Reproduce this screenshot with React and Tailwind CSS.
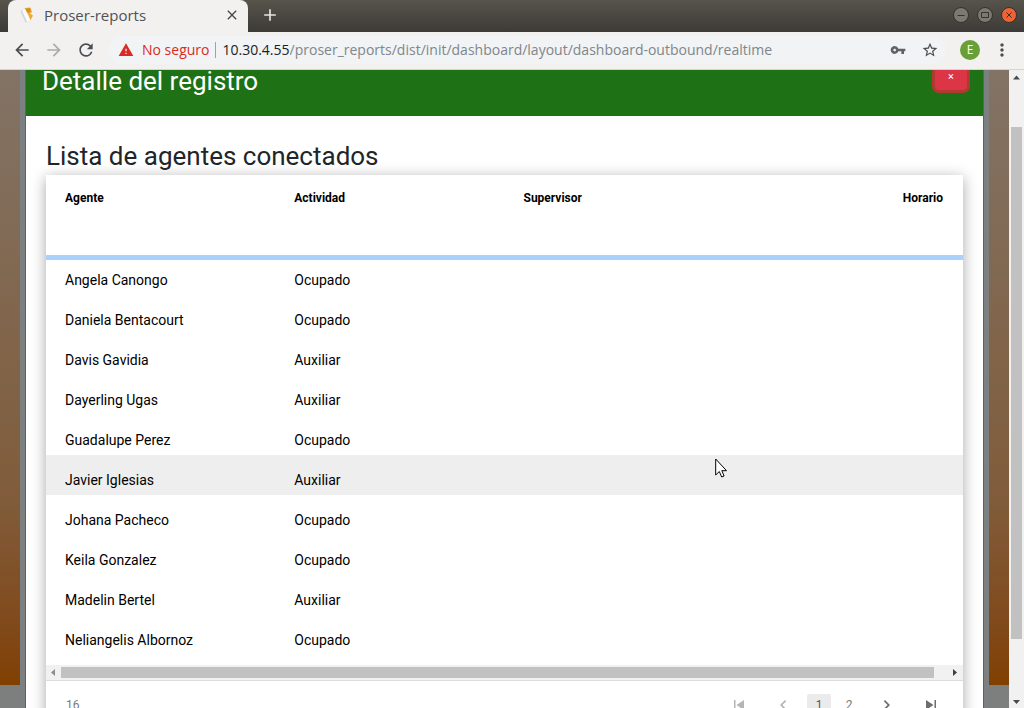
import React from "react";
import {
  MdAdd,
  MdArrowBack,
  MdArrowForward,
  MdClose,
  MdMoreVert,
  MdRefresh,
  MdStarBorder,
  MdVpnKey,
  MdWarning,
} from "react-icons/md";

const agents = [
  ["Angela Canongo", "Ocupado"],
  ["Daniela Bentacourt", "Ocupado"],
  ["Davis Gavidia", "Auxiliar"],
  ["Dayerling Ugas", "Auxiliar"],
  ["Guadalupe Perez", "Ocupado"],
  ["Javier Iglesias", "Auxiliar"],
  ["Johana Pacheco", "Ocupado"],
  ["Keila Gonzalez", "Ocupado"],
  ["Madelin Bertel", "Auxiliar"],
  ["Neliangelis Albornoz", "Ocupado"],
];

function Favicon() {
  return (
    <svg viewBox="0 0 16 16" className="size-4" aria-hidden="true">
      <path d="M0.500 4 3.500 2.500 9 14.500 5.500 15.500z" fill="#cfd3dd" />
      <path d="M2 3.500 5 2 13 12 7 15z" fill="#fbfbfd" />
      <path d="M4.500 1 10.500.500 12 5 10 6.500 13 8.500 10.500 13.500 8.500 8.500z" fill="#edaa3a" />
      <path d="M5.500 1.800 10 1.300 10.500 4.500 8 6z" fill="#d48f1d" />
    </svg>
  );
}

function WindowButton({ label, tone, children }) {
  return (
    <button
      type="button"
      aria-label={label}
      className={`flex size-4 items-center justify-center rounded-full border border-[#33322e] ${tone}`}
    >
      <svg viewBox="0 0 10 10" className="size-2.5" fill="none" stroke="#35332f">
        {children}
      </svg>
    </button>
  );
}

function TabStrip() {
  return (
    <div className="flex h-8 shrink-0 items-end bg-linear-to-b from-[#57544c] to-[#3d3b37] pl-2">
      <div className="flex h-8 w-60 items-center rounded-t-lg bg-[#f2f1f0] pr-2 pb-0.5 pl-3 text-[#4f5256]">
        <Favicon />
        <span className="ml-2 flex-1 text-[15px] leading-5">Proser-reports</span>
        <button type="button" aria-label="Cerrar pestaña">
          <MdClose className="size-4 text-[#45494d]" />
        </button>
      </div>
      <button type="button" aria-label="Nueva pestaña" className="ml-3 self-center pb-0.5">
        <MdAdd className="size-5 text-[#e6e4e0]" />
      </button>
      <div className="ml-auto flex gap-2 self-center pr-[7px] pb-0.5">
        <WindowButton label="Minimizar" tone="bg-[#7b7970]">
          <path d="M1.500 5.500h7" />
        </WindowButton>
        <WindowButton label="Maximizar" tone="bg-[#7b7970]">
          <path d="M1.500 2.500h7v5h-7z" />
        </WindowButton>
        <WindowButton label="Cerrar" tone="bg-[#ef6236]">
          <path d="m2.500 2.500 5 5m0-5-5 5" />
        </WindowButton>
      </div>
    </div>
  );
}

function Toolbar() {
  return (
    <div className="flex h-[38px] shrink-0 items-center border-b border-[#d5d4d2] bg-[#f2f1f0] px-3 pb-0.5 text-[#4a4d51]">
      <button type="button" aria-label="Atrás">
        <MdArrowBack className="size-5" />
      </button>
      <button type="button" aria-label="Adelante" className="ml-3 text-[#a9aaab]">
        <MdArrowForward className="size-5" />
      </button>
      <button type="button" aria-label="Recargar" className="ml-3">
        <MdRefresh className="size-5" />
      </button>
      <div className="ml-3 flex h-7 min-w-0 flex-1 items-center rounded-full bg-[#f1f3f4] pr-2 pl-2.5 text-sm">
        <MdWarning className="size-4 shrink-0 text-[#d92b22]" />
        <span className="ml-2 whitespace-nowrap text-[#d92b22]">No seguro</span>
        <span className="mx-1.5 h-4 w-px shrink-0 bg-[#a0a3a6]" />
        <label htmlFor="address" className="whitespace-nowrap text-[#202124]">
          10.30.4.55
        </label>
        <input
          id="address"
          type="text"
          defaultValue="/proser_reports/dist/init/dashboard/layout/dashboard-outbound/realtime"
          className="min-w-0 flex-1 bg-transparent text-[#80868b] outline-none"
        />
        <button type="button" aria-label="Contraseñas">
          <MdVpnKey className="size-4 text-[#5f6368]" />
        </button>
        <button type="button" aria-label="Añadir a marcadores" className="ml-4">
          <MdStarBorder className="size-4 scale-110 text-[#4a4d51]" />
        </button>
      </div>
      <button
        type="button"
        aria-label="Perfil"
        className="ml-3.5 flex size-5 items-center justify-center rounded-full bg-[#689f38] text-xs text-white"
      >
        E
      </button>
      <button type="button" aria-label="Menú" className="ml-3">
        <MdMoreVert className="size-5" />
      </button>
    </div>
  );
}

function Backdrop() {
  return (
    <div className="flex w-5 shrink-0 flex-col bg-[#7d7f7e]">
      <div className="flex-1 bg-linear-to-b from-[#827365] from-0% via-[#805c3a] via-70% to-[#804000]" />
      <div className="h-[23px]" />
    </div>
  );
}

function Header() {
  return (
    <header className="flex h-[46px] shrink-0 items-start justify-between bg-[#1e7115] pr-4 pl-4">
      <h4 className="text-[26px] leading-[22px] text-white">Detalle del registro</h4>
      <button
        type="button"
        aria-label="Cerrar detalle"
        className="h-5 w-8 rounded-b-sm bg-[#dc3545] pb-1.5 text-[11px] leading-3 text-white ring-3 ring-[#b03a30]"
      >
        ×
      </button>
    </header>
  );
}

function AgentTable() {
  return (
    <div className="relative overflow-hidden">
      <table className="w-full table-fixed text-sm text-black">
        <thead>
          <tr className="h-20 text-left align-top text-xs">
            <th className="px-[19px] pt-3.5 leading-[18px]">Agente</th>
            <th className="px-[19px] pt-3.5 leading-[18px]">Actividad</th>
            <th className="px-[19px] pt-3.5 leading-[18px]">Supervisor</th>
            <th className="px-5 pt-3.5 text-right leading-[18px]">Horario</th>
          </tr>
        </thead>
        <tbody>
          {agents.map(([name, activity]) => (
            <tr
              key={name}
              className={`h-10 ${name === "Javier Iglesias" ? "bg-[#eeeeee]" : ""}`}
            >
              <td className="px-[19px] pt-2.5">{name}</td>
              <td className="px-[19px] pt-2.5">{activity}</td>
              <td />
              <td />
            </tr>
          ))}
        </tbody>
      </table>
      <div role="progressbar" aria-label="Cargando" className="absolute inset-x-0 top-20 h-[5px] bg-[#aad1f9]" />
    </div>
  );
}

function HorizontalScroll() {
  return (
    <div className="mt-2.5 flex h-[15px] items-center bg-[#f1f1f1]">
      <svg viewBox="0 0 15 15" className="size-[15px]" fill="#8d8d8d">
        <path d="M9 4v7L5 7.500z" />
      </svg>
      <div className="mr-3.5 h-[11px] flex-1 bg-[#c1c1c1]" />
      <svg viewBox="0 0 15 15" className="size-[15px]" fill="#3f3f3f">
        <path d="M5 4v7l4-3.500z" />
      </svg>
    </div>
  );
}

function PagerIcon({ label, muted, path }) {
  return (
    <button type="button" aria-label={label} className="flex w-6 justify-center">
      <svg
        viewBox="0 0 12 12"
        className={`size-3 ${muted ? "text-[#b5b5b5]" : "text-[#6e6e6e]"}`}
        fill="currentColor"
      >
        {path}
      </svg>
    </button>
  );
}

function Pager() {
  return (
    <footer className="flex h-12 items-center justify-between border-t border-[#dcdcdc] px-5 text-xs text-[#7a7a7a]">
      <span>16</span>
      <nav aria-label="Páginas" className="flex items-center">
        <PagerIcon
          label="Primera"
          muted
          path={<path d="M1 1h1.500v10H1zM11 1v10L3.500 6z" />}
        />
        <span className="w-5" />
        <PagerIcon
          label="Anterior"
          muted
          path={<path d="M8 1 3 6l5 5 1.200-1.200L5.400 6l3.800-3.800z" />}
        />
        <span className="w-3" />
        <button type="button" className="h-[22px] w-6 rounded-xs bg-[#ebebeb] text-[#5a5a5a]">
          1
        </button>
        <button type="button" className="ml-1.5 h-[22px] w-6">
          2
        </button>
        <span className="w-3.5" />
        <PagerIcon
          label="Siguiente"
          path={<path d="m4 1 5 5-5 5-1.200-1.200L6.600 6 2.800 2.200z" />}
        />
        <span className="w-5" />
        <PagerIcon
          label="Última"
          path={<path d="M9.500 1H11v10H9.500zM1 1v10l7.500-5z" />}
        />
      </nav>
    </footer>
  );
}

function PageScroll() {
  return (
    <div className="flex w-[15px] shrink-0 flex-col items-center bg-[#f1f1f1]">
      <svg viewBox="0 0 15 15" className="size-[15px]" fill="#4a4a4a">
        <path d="M4 9.500h7l-3.500-4z" />
      </svg>
      <div className="mt-[42px] w-[11px] flex-1 bg-[#c1c1c1]" />
      <div className="h-[54px]" />
      <svg viewBox="0 0 15 15" className="size-[15px]" fill="#4a4a4a">
        <path d="M4 7h7l-3.500 4z" />
      </svg>
    </div>
  );
}

export default function App() {
  return (
    <div className="relative flex h-screen flex-col overflow-hidden bg-white font-['Open_Sans',sans-serif]">
      <TabStrip />
      <Toolbar />
      <div className="flex min-h-0 flex-1 font-[Roboto,sans-serif]">
        <Backdrop />
        <div className="w-1.5 shrink-0 border-r border-[#5f6162] bg-[#7d8081]" />
        <main className="flex min-w-0 flex-1 flex-col overflow-hidden bg-white">
          <Header />
          <section className="px-5 pt-6">
            <h4 className="pb-0.5 text-[26px] leading-[33px] text-[#212529]">Lista de agentes conectados</h4>
            <div className="bg-white shadow-[0_3px_14px_rgba(0,0,0,0.35)]">
              <AgentTable />
              <HorizontalScroll />
              <Pager />
            </div>
          </section>
        </main>
        <div className="w-1.5 shrink-0 border-l border-[#5f6162] bg-[#7d8081]" />
        <Backdrop />
        <PageScroll />
      </div>
      <svg
        viewBox="0 0 12 20"
        className="pointer-events-none absolute top-[458px] left-[715px] h-5 w-3"
        aria-hidden="true"
      >
        <path
          d="M.700 1v16l3.600-3.500 2.400 5.500 2.400-1-2.300-5.300h4.700z"
          fill="#fff"
          stroke="#000"
          strokeLinejoin="round"
        />
      </svg>
    </div>
  );
}
